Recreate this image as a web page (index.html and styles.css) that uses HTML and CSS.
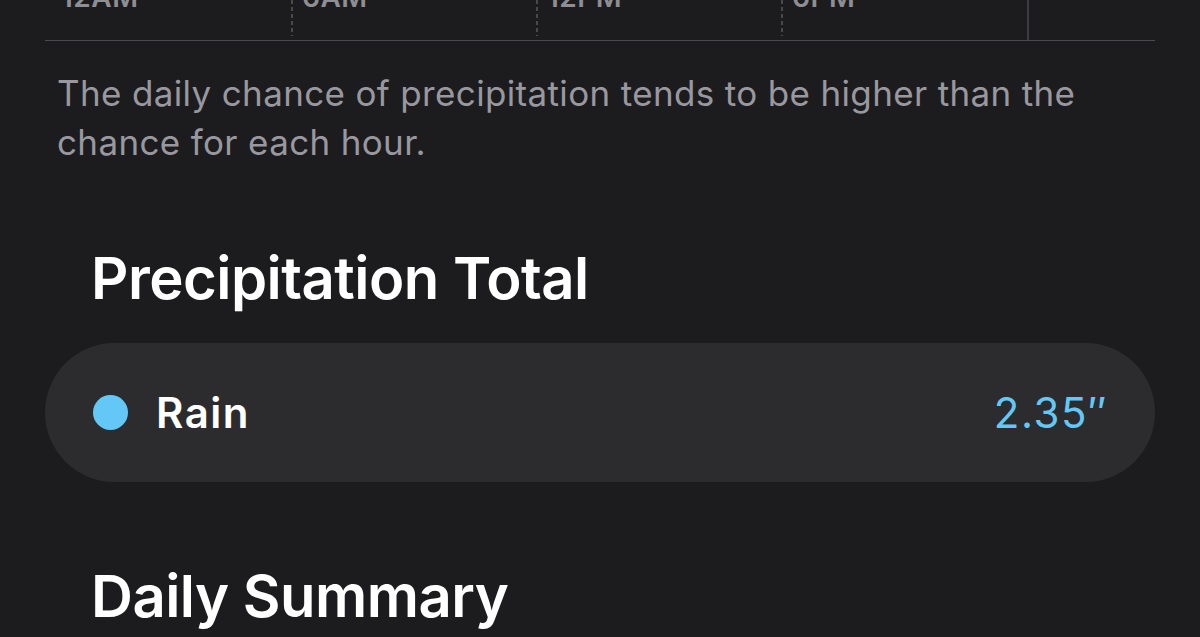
FILE: index.html
```html
<!DOCTYPE html>
<html lang="en">
<head>
    <meta charset="UTF-8" />
    <meta name="viewport" content="width=device-width, initial-scale=1.0" />
    <title>Precipitation</title>
    <link rel="stylesheet" href="styles.css">
</head>
<body>
<main class="page">
    <div class="chart-axis">
        <div class="axis-col"><span class="axis-label">12AM</span></div>
        <div class="axis-col dotted"><span class="axis-label">6AM</span></div>
        <div class="axis-col dotted"><span class="axis-label">12PM</span></div>
        <div class="axis-col dotted"><span class="axis-label">6PM</span></div>
        <div class="axis-col solid"></div>
    </div>

    <p class="note">The daily chance of precipitation tends to be higher than the chance for each hour.</p>

    <h2 class="section-title">Precipitation Total</h2>

    <div class="total-row">
        <span class="dot"></span>
        <span class="total-name">Rain</span>
        <span class="total-value">2.35&Prime;</span>
    </div>

    <h2 class="section-title summary">Daily Summary</h2>
</main>
</body>
</html>
```

FILE: styles.css
```css
body {
  margin: 0;
  background-color: #1c1c1e;
  color: #fff;
  font-family: Inter, "Noto Sans", sans-serif;
  overflow: hidden;
}

.page {
  padding: 0 45px;
}

.chart-axis {
  display: grid;
  grid-template-columns: 246px 245px 245px 246px 1fr;
  height: 40px;
  border-bottom: 1px solid #4a4a4e;
}

.axis-col {
  min-width: 0;
}

.axis-col.dotted {
  height: 36px;
  background-image: linear-gradient(to bottom, #4a4a4d 4px, transparent 4px);
  background-size: 2px 7px;
  background-repeat: repeat-y;
}

.axis-col.solid {
  border-left: 2px solid #3c3c40;
}

.axis-label {
  display: block;
  white-space: nowrap;
  margin-top: -18px;
  padding-left: 11px;
  font-size: 28px;
  font-weight: 600;
  line-height: 30px;
  letter-spacing: 0.5px;
  color: #8e8e93;
}

.axis-col:first-child .axis-label {
  padding-left: 16px;
}

.note {
  margin: 28px 0 0 12px;
  font-size: 35px;
  line-height: 49px;
  color: #98989e;
  letter-spacing: 0.35px;
}

.section-title {
  margin: 76px 0 0 46px;
  font-size: 58px;
  font-weight: 600;
  line-height: 70px;
  letter-spacing: -0.5px;
  color: #fff;
}

.total-row {
  display: flex;
  align-items: center;
  height: 139px;
  margin-top: 30px;
  padding: 0 47px 0 48px;
  background-color: #2c2c2e;
  border-radius: 70px;
}

.dot {
  width: 35px;
  height: 35px;
  border-radius: 50%;
  background-color: #64c8f6;
  flex-shrink: 0;
}

.total-name {
  margin-left: 28px;
  font-size: 42px;
  font-weight: 600;
  letter-spacing: 1.5px;
  color: #fff;
}

.total-value {
  margin-left: auto;
  font-size: 42px;
  font-weight: 400;
  letter-spacing: 1.5px;
  color: #64c8f6;
}

.section-title.summary {
  margin-top: 79px;
}
```
